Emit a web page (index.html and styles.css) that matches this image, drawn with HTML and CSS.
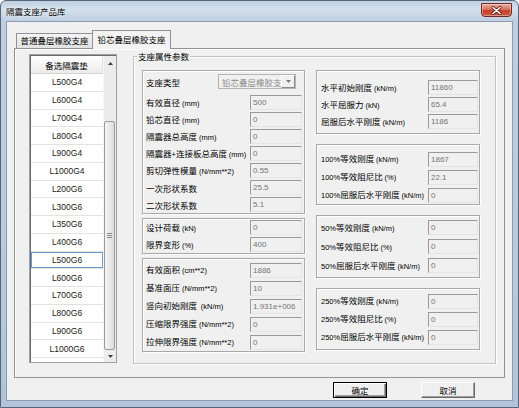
FILE: index.html
```html
<!DOCTYPE html>
<html lang="zh-CN">
<head>
<meta charset="utf-8">
<title>隔震支座产品库</title>
<link rel="stylesheet" href="styles.css">
</head>
<body>
<div class="window">
  <div class="titlebar">
    <span class="title">隔震支座产品库</span>
    <span class="close"><svg width="11" height="9" viewBox="0 0 11 9"><path d="M2 1.5 L9 7.5 M9 1.5 L2 7.5" stroke="#5a1f18" stroke-width="3" stroke-linecap="round"/><path d="M2 1.5 L9 7.5 M9 1.5 L2 7.5" stroke="#fff" stroke-width="1.6" stroke-linecap="round"/></svg></span>
  </div>
  <div class="client">
    <div class="tabs">
      <div class="tab tab1">普通叠层橡胶支座</div>
      <div class="tab tab2">铅芯叠层橡胶支座</div>
    </div>
    <div class="panel">
      <div class="list">
        <div class="list-inner">
          <div class="cells">
            <div class="head">备选隔震垫</div>
            <div class="row">L500G4</div>
            <div class="row">L600G4</div>
            <div class="row">L700G4</div>
            <div class="row">L800G4</div>
            <div class="row">L900G4</div>
            <div class="row">L1000G4</div>
            <div class="row">L200G6</div>
            <div class="row">L300G6</div>
            <div class="row">L350G6</div>
            <div class="row">L400G6</div>
            <div class="row sel">L500G6</div>
            <div class="row">L600G6</div>
            <div class="row">L700G6</div>
            <div class="row">L800G6</div>
            <div class="row">L900G6</div>
            <div class="row">L1000G6</div>
            <div class="row"></div>
          </div>
          <div class="scrollbar">
            <div class="sb-up"><svg width="5" height="3" viewBox="0 0 5 3"><path d="M0 3 L2.5 0 L5 3Z" fill="#3c3c3c"/></svg></div>
            <div class="sb-track">
              <div class="sb-thumb"><svg width="5" height="5" viewBox="0 0 5 5"><path d="M0 0.5H5M0 2.5H5M0 4.5H5" stroke="#8a8a8a" stroke-width="1"/></svg></div>
            </div>
            <div class="sb-down"><svg width="5" height="3" viewBox="0 0 5 3"><path d="M0 0 L2.5 3 L5 0Z" fill="#3c3c3c"/></svg></div>
          </div>
        </div>
      </div>

      <div class="group">
        <span class="group-label">支座属性参数</span>
        <div class="col left">
          <div class="box a">
            <div class="field combo-row">
              <span class="lbl">支座类型</span>
              <div class="combo"><span class="combo-text">铅芯叠层橡胶支座</span><span class="combo-btn"><svg width="5" height="3" viewBox="0 0 5 3"><path d="M0 0 L2.5 3 L5 0Z" fill="#7a7a7a"/></svg></span></div>
            </div>
            <div class="field"><span class="lbl">有效直径 <span class="u">(mm)</span></span><span class="inp">500</span></div>
            <div class="field"><span class="lbl">铅芯直径 <span class="u">(mm)</span></span><span class="inp">0</span></div>
            <div class="field"><span class="lbl">隔震器总高度 <span class="u">(mm)</span></span><span class="inp">0</span></div>
            <div class="field"><span class="lbl">隔震器<span class="u">+</span>连接板总高度 <span class="u">(mm)</span></span><span class="inp">0</span></div>
            <div class="field"><span class="lbl">剪切弹性模量 <span class="u">(N/mm**2)</span></span><span class="inp">0.55</span></div>
            <div class="field"><span class="lbl">一次形状系数</span><span class="inp">25.5</span></div>
            <div class="field"><span class="lbl">二次形状系数</span><span class="inp">5.1</span></div>
          </div>
          <div class="box b">
            <div class="field"><span class="lbl">设计荷载 <span class="u">(kN)</span></span><span class="inp">0</span></div>
            <div class="field"><span class="lbl">限界变形 <span class="u">(%)</span></span><span class="inp">400</span></div>
          </div>
          <div class="box c">
            <div class="field"><span class="lbl">有效面积 <span class="u">(cm**2)</span></span><span class="inp">1886</span></div>
            <div class="field"><span class="lbl">基准面压 <span class="u">(N/mm**2)</span></span><span class="inp">10</span></div>
            <div class="field"><span class="lbl">竖向初始刚度 &nbsp;<span class="u">(kN/m)</span></span><span class="inp">1.931e+006</span></div>
            <div class="field"><span class="lbl">压缩限界强度 <span class="u">(N/mm**2)</span></span><span class="inp">0</span></div>
            <div class="field"><span class="lbl">拉伸限界强度 <span class="u">(N/mm**2)</span></span><span class="inp">0</span></div>
          </div>
        </div>

        <div class="col right">
          <div class="box d">
            <div class="field"><span class="lbl">水平初始刚度 <span class="u">(kN/m)</span></span><span class="inp">11860</span></div>
            <div class="field"><span class="lbl">水平屈服力 <span class="u">(kN)</span></span><span class="inp">65.4</span></div>
            <div class="field"><span class="lbl">屈服后水平刚度 <span class="u">(kN/m)</span></span><span class="inp">1186</span></div>
          </div>
          <div class="box e">
            <div class="field"><span class="lbl"><span class="u">100%</span>等效刚度 <span class="u">(kN/m)</span></span><span class="inp">1867</span></div>
            <div class="field"><span class="lbl"><span class="u">100%</span>等效阻尼比 <span class="u">(%)</span></span><span class="inp">22.1</span></div>
            <div class="field"><span class="lbl"><span class="u">100%</span>屈服后水平刚度 <span class="u">(kN/m)</span></span><span class="inp">0</span></div>
          </div>
          <div class="box f">
            <div class="field"><span class="lbl"><span class="u">50%</span>等效刚度 <span class="u">(kN/m)</span></span><span class="inp">0</span></div>
            <div class="field"><span class="lbl"><span class="u">50%</span>等效阻尼比 <span class="u">(%)</span></span><span class="inp">0</span></div>
            <div class="field"><span class="lbl"><span class="u">50%</span>屈服后水平刚度 <span class="u">(kN/m)</span></span><span class="inp">0</span></div>
          </div>
          <div class="box g">
            <div class="field"><span class="lbl"><span class="u">250%</span>等效刚度 <span class="u">(kN/m)</span></span><span class="inp">0</span></div>
            <div class="field"><span class="lbl"><span class="u">250%</span>等效阻尼比 <span class="u">(%)</span></span><span class="inp">0</span></div>
            <div class="field"><span class="lbl"><span class="u">250%</span>屈服后水平刚度 <span class="u">(kN/m)</span></span><span class="inp">0</span></div>
          </div>
        </div>
      </div>
    </div>
    <div class="buttons">
      <div class="btn default">确定</div>
      <div class="btn">取消</div>
    </div>
  </div>
</div>
</body>
</html>
```
FILE: styles.css
```css
* { box-sizing: border-box; }
html, body { margin: 0; padding: 0; }
body {
  width: 519px;
  height: 408px;
  overflow: hidden;
  background: #fff;
  font-family: "Noto Sans CJK SC", "Liberation Sans", sans-serif;
  font-size: 8.5px;
  color: #000;
}

.window {
  width: 519px;
  height: 408px;
  border: 1px solid #56667a;
  border-radius: 6px 6px 0 0;
  background: linear-gradient(180deg, #c0cfe0 0, #d3dfec 8px, #bfcfe1 20px, #b9cadd 60%, #b2c4d9 100%);
  padding: 0 5px 6px 5px;
  display: flex;
  flex-direction: column;
}

.titlebar {
  height: 20px;
  flex-shrink: 0;
  display: flex;
  justify-content: space-between;
  align-items: flex-start;
}
.title {
  margin-top: 4px;
  margin-left: 0;
  line-height: 12px;
  font-size: 8.5px;
  color: #000;
  text-shadow: 0 0 3px #fff, 0 0 5px #eef3f8;
}
.close {
  width: 31px;
  height: 14px;
  margin-top: 2px;
  margin-right: 1px;
  border: 1px solid #6e2b23;
  border-radius: 0 0 4px 4px;
  background: linear-gradient(180deg, #eaa99c 0, #d9735e 45%, #c43f2a 55%, #cf5a41 100%);
  box-shadow: inset 0 0 0 1px rgba(255, 255, 255, 0.35);
  display: flex;
  align-items: center;
  justify-content: center;
}

.client {
  flex: 1;
  border: 1px solid #8b9bb0;
  background: #f0f0f0;
  padding-top: 8px;
  display: flex;
  flex-direction: column;
}

.tabs {
  height: 18px;
  flex-shrink: 0;
  display: flex;
  align-items: flex-end;
  margin-left: 9px;
}
.tab {
  border: 1px solid #8e9198;
  border-bottom: none;
  white-space: nowrap;
  text-align: center;
  line-height: 13px;
}
.tab1 {
  width: 76px;
  height: 15px;
  background: linear-gradient(180deg, #f4f4f4, #e2e2e2);
  border-right: none;
}
.tab2 {
  width: 79px;
  height: 19px;
  margin-bottom: -1px;
  padding-top: 2px;
  background: #f3f3f3;
  position: relative;
  z-index: 1;
}

.panel {
  height: 330px;
  flex-shrink: 0;
  margin: 0 7px;
  border: 1px solid #929292;
  background: #f0f0f0;
  box-shadow: inset 1px 1px 0 #fcfcfc;
  display: flex;
  align-items: flex-start;
  gap: 16px;
  padding: 5px 0 0 14px;
}

/* list */
.list {
  width: 88px;
  height: 309px;
  flex-shrink: 0;
  border: 1px solid #a0a0a0;
}
.list-inner {
  height: 100%;
  border-left: 1px solid #6b6b6b;
  border-top: 1px solid #6b6b6b;
  background: #fff;
  display: flex;
}
.cells {
  width: 72px;
  display: flex;
  flex-direction: column;
  overflow: hidden;
}
.head {
  height: 18px;
  flex-shrink: 0;
  border-bottom: 1px solid #d5d5d5;
  border-right: 1px solid #e2e2e2;
  background: linear-gradient(180deg, #ffffff, #f4f4f4 60%, #ebebeb);
  display: flex;
  align-items: center;
  justify-content: center;
}
.row {
  height: 17.75px;
  flex-shrink: 0;
  border-bottom: 1px solid #e2e2e2;
  display: flex;
  align-items: center;
  justify-content: center;
  font-family: "Liberation Sans", sans-serif;
  font-size: 8.5px;
  color: #1a1a1a;
}
.row.sel {
  box-shadow: inset 0 0 0 1px #6a9ad4;
}

.scrollbar {
  width: 13px;
  display: flex;
  flex-direction: column;
  background: #ececec;
  border-left: 1px solid #f7f7f7;
}
.sb-up {
  height: 15px;
  flex-shrink: 0;
  display: flex;
  align-items: center;
  justify-content: center;
}
.sb-down {
  height: 12px;
  flex-shrink: 0;
  display: flex;
  align-items: center;
  justify-content: center;
}
.sb-track {
  flex: 1;
  padding: 50px 1px 0 0;
}
.sb-thumb {
  height: 229px;
  border: 1px solid #9a9a9a;
  border-radius: 2px;
  background: linear-gradient(90deg, #f5f5f5, #e6e6e6 60%, #dcdcdc);
  display: flex;
  align-items: center;
  justify-content: center;
}

/* group box */
.group {
  position: relative;
  width: 363px;
  height: 308px;
  flex-shrink: 0;
  margin-top: 2px;
  border: 1px solid #c2c2c2;
  box-shadow: inset 1px 1px 0 #fff, 1px 1px 0 #fff;
  padding: 13px 0 0 8px;
  display: flex;
  align-items: flex-start;
  gap: 11px;
}
.group-label {
  position: absolute;
  top: -7px;
  left: 3px;
  padding: 0 1px;
  line-height: 12px;
  background: #f0f0f0;
}

.col {
  display: flex;
  flex-direction: column;
}
.col.left { width: 163px; gap: 4px; }
.col.right { width: 164px; gap: 10px; }

.box {
  border: 1px solid #a8a8a8;
  box-shadow: inset 1px 1px 0 #fff, 1px 1px 0 #fff;
  display: flex;
  flex-direction: column;
}
.left .box { padding-left: 3px; padding-right: 2px; }
.right .box { padding-left: 4px; padding-right: 1px; }

.field {
  display: flex;
  align-items: center;
  flex-shrink: 0;
}
.lbl {
  flex: 1;
  min-width: 0;
  white-space: nowrap;
  line-height: 12px;
}
.u {
  font-family: "Liberation Sans", sans-serif;
  font-size: 7.5px;
}
.inp {
  flex-shrink: 0;
  height: 15px;
  border: 1px solid;
  border-color: #9a9a9a #e4e4e4 #e4e4e4 #9a9a9a;
  background: #f0f0f0;
  font-family: "Liberation Sans", sans-serif;
  font-size: 8px;
  line-height: 11px;
  color: #747474;
  padding: 1px 0 0 2px;
  white-space: nowrap;
  overflow: hidden;
}
.left .inp { width: 52px; }
.right .inp { width: 50px; }

.a { height: 144px; padding-top: 2px; }
.a .field { height: 17px; }
.a .combo-row { margin-bottom: 4px; }
.b { height: 36px; }
.b .field { height: 17px; }
.c { height: 94px; padding-top: 2px; }
.c .field { height: 18px; }
.d { height: 64px; padding-top: 8px; }
.d .field { height: 17px; }
.e { height: 61px; padding-top: 5px; }
.e .field { height: 18px; }
.f { height: 63px; padding-top: 2px; }
.f .field { height: 19px; }
.g { height: 62px; padding-top: 3px; }
.g .field { height: 18px; }

.combo {
  width: 78px;
  height: 15px;
  flex-shrink: 0;
  margin-right: 6px;
  border: 1px solid #b4b4b4;
  background: #f0f0f0;
  display: flex;
  align-items: center;
}
.combo-text {
  flex: 1;
  min-width: 0;
  overflow: hidden;
  white-space: nowrap;
  color: #8c8c8c;
  padding-left: 3px;
  line-height: 12px;
}
.combo-btn {
  width: 14px;
  height: 13px;
  flex-shrink: 0;
  border: 1px solid;
  border-color: #fff #8a8a8a #8a8a8a #fff;
  background: #f0f0f0;
  display: flex;
  align-items: center;
  justify-content: center;
}

/* buttons */
.buttons {
  display: flex;
  justify-content: flex-end;
  gap: 34px;
  margin-top: 4px;
  padding-right: 37px;
}
.btn {
  width: 54px;
  height: 16px;
  border: 1px solid;
  border-color: #fff #696969 #696969 #fff;
  box-shadow: inset -1px -1px 0 #a0a0a0;
  background: #f0f0f0;
  display: flex;
  align-items: center;
  justify-content: center;
  line-height: 12px;
}
.btn.default {
  border: 1px solid #000;
  box-shadow: inset 1px 1px 0 #fff, inset -1px -1px 0 #696969, inset -2px -2px 0 #a0a0a0;
}
```
